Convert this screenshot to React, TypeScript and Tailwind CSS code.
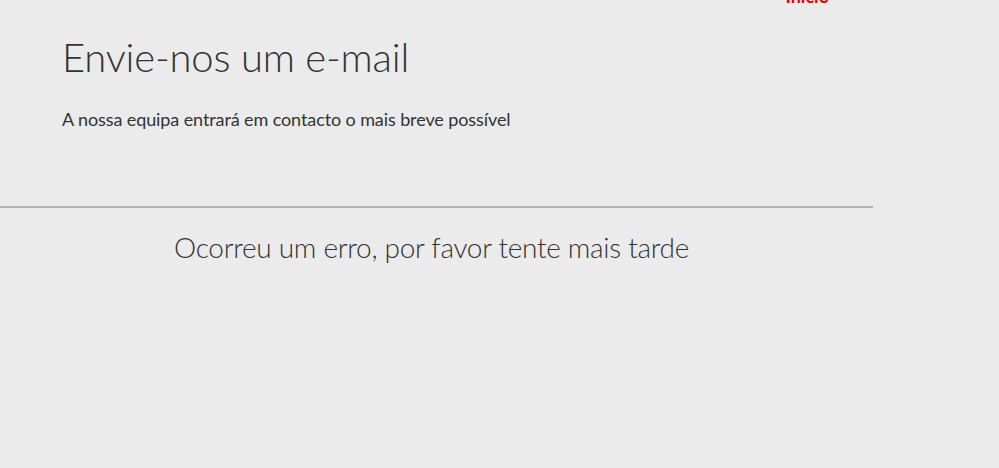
import React from 'react'

const App = () => {
  return (
    <div
      className="min-h-[468px] w-full bg-[#ebebeb] text-[#333333] overflow-hidden"
      style={{ fontFamily: 'Lato, "Open Sans", sans-serif' }}
    >
      <div className="w-[873px]">
        <div className="flex justify-end pr-[44px] -mt-[14px] h-[20px]">
          <a className="text-[#e60000] text-[18px] font-bold leading-[20px]">Início</a>
        </div>
        <div className="pl-[62px] pt-[27px] pb-[75px]">
          <h1 className="text-[40px] font-light leading-[48px] tracking-[-0.2px]">Envie-nos um e-mail</h1>
          <p className="mt-[26px] text-[18px] leading-[24px] tracking-[-0.1px]">A nossa equipa entrará em contacto o mais breve possível</p>
        </div>
        <div className="h-[2px] bg-[#b3b3b3]" />
        <p className="mt-[21px] text-center pr-[10px] text-[28px] font-light leading-[36px] tracking-[-0.3px]">
          Ocorreu um erro, por favor tente mais tarde
        </p>
      </div>
    </div>
  )
}

export default App
